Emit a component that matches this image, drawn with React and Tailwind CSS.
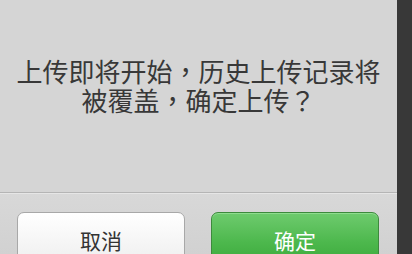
const P = ({ children }) => (
  <span className="leading-[29px]" style={{ fontFamily: '"Noto Sans CJK TC", sans-serif' }}>{children}</span>
);

export default function App() {
  return (
    <div className="flex h-[254px] w-[412px] overflow-hidden bg-[#3a3a3a]" style={{ fontFamily: '"Noto Sans CJK SC", "Noto Sans", sans-serif' }}>
      <div className="flex w-[397px] flex-col bg-[#d5d5d5]">
        <div className="flex h-[192px] shrink-0 flex-col items-center justify-center pb-[23px] text-center text-[26px] leading-[29px] text-[#383838]">
          <div>上传即将开始<P>，</P>历史上传记录将</div>
          <div>被覆盖<P>，</P>确定上传<P>？</P></div>
        </div>
        <div className="h-px shrink-0 bg-[#b5b5b5]" />
        <div className="h-px shrink-0 bg-[#e6e6e6]" />
        <div className="flex flex-1 gap-[26px] bg-gradient-to-b from-[#d8d8d8] to-[#cfcfcf] pl-[17px] pr-[18px] pt-[18px]">
          <div className="flex h-[60px] w-[168px] shrink-0 items-center justify-center rounded-[7px] border border-[#a8a8a8] bg-gradient-to-b from-[#ffffff] to-[#ececec] pb-[3px] text-[21px] text-[#333333] shadow-[0_1px_0_#eeeeee]">
            取消
          </div>
          <div className="flex h-[60px] w-[168px] shrink-0 items-center justify-center rounded-[7px] border border-[#3d8a3d] bg-gradient-to-b from-[#6ecb6e] via-[#4db84d] to-[#35a535] pb-[3px] text-[21px] text-white shadow-[inset_0_1px_0_#8fdc8f]">
            确定
          </div>
        </div>
      </div>
      <div className="flex-1 bg-[#383838]" />
    </div>
  );
}
